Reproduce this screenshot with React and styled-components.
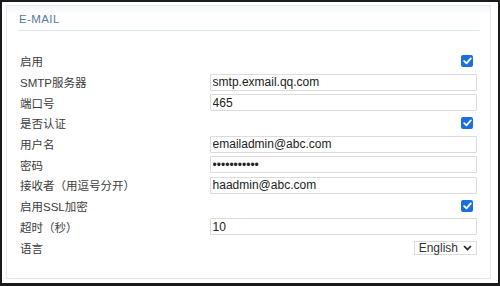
import React, { useState } from 'react';
import styled, { createGlobalStyle } from 'styled-components';

const GlobalStyle = createGlobalStyle`
  html, body {
    margin: 0;
    padding: 0;
    background: #ffffff;
  }
  body {
    font-family: 'Liberation Sans', 'Noto Sans CJK SC', sans-serif;
  }
`;

const rows = [
  { label: '启用', type: 'check', value: true },
  { label: 'SMTP服务器', type: 'text', value: 'smtp.exmail.qq.com' },
  { label: '端口号', type: 'text', value: '465' },
  { label: '是否认证', type: 'check', value: true },
  { label: '用户名', type: 'text', value: 'emailadmin@abc.com' },
  { label: '密码', type: 'password', value: 'abcdefghijk' },
  { label: '接收者（用逗号分开）', type: 'text', value: 'haadmin@abc.com' },
  { label: '启用SSL加密', type: 'check', value: true },
  { label: '超时（秒）', type: 'text', value: '10' },
  { label: '语言', type: 'select', value: 'English' },
];

const App = () => {
  const [values, setValues] = useState(rows.map((r) => r.value));

  const handleChange = (i, v) => {
    setValues((prev) => prev.map((p, idx) => (idx === i ? v : p)));
  };

  return (
    <>
      <GlobalStyle />
      <Frame>
        <Panel>
          <Header>
            <Title>E-MAIL</Title>
          </Header>
          <Form>
            {rows.map((row, i) => (
              <Row key={row.label}>
                <Label>{row.label}</Label>
                {row.type === 'check' && (
                  <CheckBox
                    checked={values[i]}
                    onClick={() => handleChange(i, !values[i])}
                  >
                    {values[i] && (
                      <svg width='9' height='8' viewBox='0 0 9 8'>
                        <path
                          d='M1.2 4.2 L3.5 6.3 L7.8 1.4'
                          fill='none'
                          stroke='#fff'
                          strokeWidth='1.8'
                          strokeLinecap='round'
                          strokeLinejoin='round'
                        />
                      </svg>
                    )}
                  </CheckBox>
                )}
                {(row.type === 'text' || row.type === 'password') && (
                  <Input
                    type={row.type}
                    value={values[i]}
                    onChange={(e) => handleChange(i, e.target.value)}
                  />
                )}
                {row.type === 'select' && (
                  <Select>
                    <span>{values[i]}</span>
                    <svg width='9' height='6' viewBox='0 0 9 6'>
                      <path
                        d='M1 1 L4.5 4.5 L8 1'
                        fill='none'
                        stroke='#222'
                        strokeWidth='1.7'
                      />
                    </svg>
                  </Select>
                )}
              </Row>
            ))}
          </Form>
        </Panel>
      </Frame>
    </>
  );
};

const Frame = styled.div`
  width: 500px;
  height: 286px;
  box-sizing: border-box;
  border: 2px solid #1a1a1a;
  border-bottom-width: 3px;
  padding: 3px 7px 4px 4px;
  background: #fff;
`;

const Panel = styled.div`
  height: 100%;
  box-sizing: border-box;
  border: 1px solid #e4e9ef;
  background: linear-gradient(#f4f6f8 0px, #ffffff 9px);
  padding: 0 11px 0 11px;
`;

const Header = styled.div`
  height: 24px;
  display: flex;
  align-items: flex-end;
  padding-left: 1px;
  border-bottom: 1px solid #dde7f3;
`;

const Title = styled.div`
  color: #587a9f;
  font-size: 11.5px;
  font-weight: 500;
  letter-spacing: 0.4px;
  line-height: 14px;
  padding-bottom: 4px;
`;

const Form = styled.div`
  display: flex;
  flex-direction: column;
  padding: 20px 2px 0 2px;
`;

const Row = styled.div`
  height: 20.7px;
  display: flex;
  align-items: center;
  justify-content: space-between;
`;

const Label = styled.div`
  width: 190px;
  color: #3c3c3c;
  font-size: 11.5px;
  white-space: nowrap;
`;

const CheckBox = styled.div`
  width: 12px;
  height: 12px;
  margin-right: 4px;
  border-radius: 2px;
  background: ${(p) => (p.checked ? '#1a6fe0' : '#fff')};
  border: ${(p) => (p.checked ? 'none' : '1px solid #777')};
  display: flex;
  align-items: center;
  justify-content: center;
  cursor: pointer;
`;

const Input = styled.input`
  width: 268px;
  height: 17px;
  box-sizing: border-box;
  border: 1px solid #dcdcdc;
  border-radius: 1px;
  padding: 0 2px;
  margin: 0;
  font-family: 'Liberation Sans', 'Noto Sans CJK SC', sans-serif;
  font-size: 12px;
  color: #222;
  outline: none;
  background: #fff;
`;

const Select = styled.div`
  height: 14px;
  box-sizing: border-box;
  display: flex;
  align-items: center;
  gap: 5px;
  padding: 0 4px 0 4px;
  border: 1px solid #dcdcdc;
  font-size: 12px;
  color: #333;
  margin-top: 1px;
`;

export default App;
